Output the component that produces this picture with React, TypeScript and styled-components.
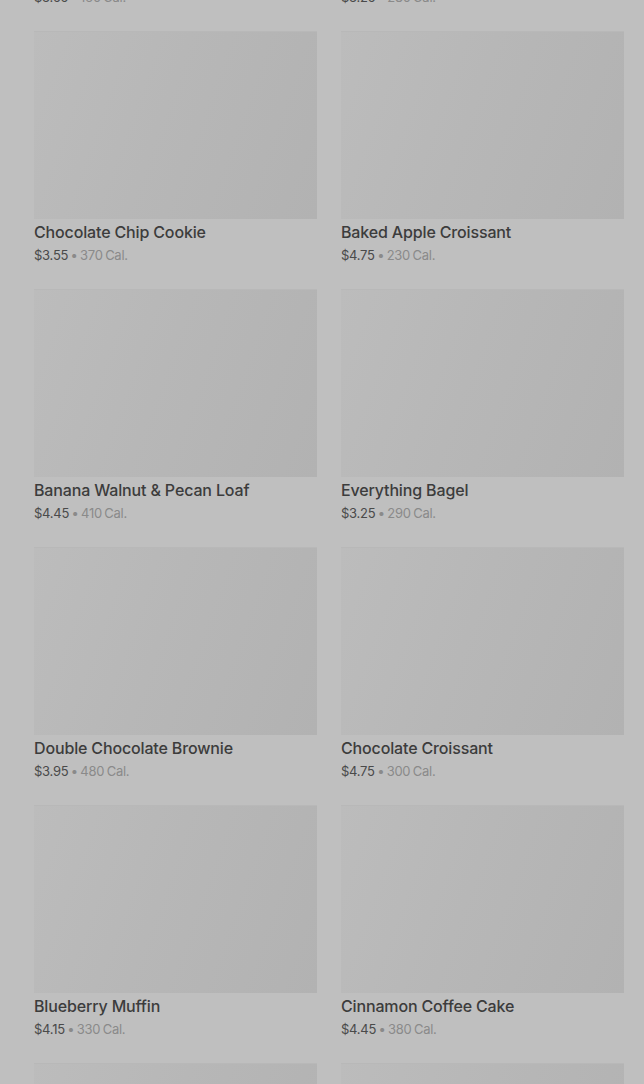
import React from 'react';
import styled, { createGlobalStyle } from 'styled-components';

const GlobalStyle = createGlobalStyle`
  html, body {
    margin: 0;
    padding: 0;
    background: #bfbfbf;
    overflow: hidden;
  }
  body {
    font-family: Inter, "Noto Sans", "Liberation Sans", sans-serif;
    -webkit-font-smoothing: antialiased;
  }
`;

interface IItem {
  name: string;
  price: string;
  cal: number;
}

const ITEMS: IItem[] = [
  { name: 'Butter Croissant', price: '$3.55', cal: 160 },
  { name: 'Plain Bagel', price: '$3.25', cal: 280 },
  { name: 'Chocolate Chip Cookie', price: '$3.55', cal: 370 },
  { name: 'Baked Apple Croissant', price: '$4.75', cal: 230 },
  { name: 'Banana Walnut & Pecan Loaf', price: '$4.45', cal: 410 },
  { name: 'Everything Bagel', price: '$3.25', cal: 290 },
  { name: 'Double Chocolate Brownie', price: '$3.95', cal: 480 },
  { name: 'Chocolate Croissant', price: '$4.75', cal: 300 },
  { name: 'Blueberry Muffin', price: '$4.15', cal: 330 },
  { name: 'Cinnamon Coffee Cake', price: '$4.45', cal: 380 },
  { name: 'Lemon Loaf', price: '$3.95', cal: 470 },
  { name: 'Cheese Danish', price: '$3.65', cal: 290 },
];

const Page = styled.div`
  height: 1084px;
  overflow: hidden;
`;

// 列表已滚动，首行只露出价格一栏
const Grid = styled.div`
  display: grid;
  grid-template-columns: 283px 283px;
  column-gap: 24px;
  row-gap: 24px;
  padding: 0 20px 0 34px;
  margin-top: -227px;
`;

const Card = styled.div`
  display: flex;
  flex-direction: column;
`;

const Thumb = styled.div`
  height: 188px;
  background: linear-gradient(110deg, #bcbcbc 0%, #b7b7b7 45%, #b2b2b2 100%);
  box-shadow: inset 0 1px 0 #b8b8b8;
`;

const Name = styled.div`
  margin-top: 2px;
  font-size: 16px;
  line-height: 22px;
  font-weight: 500;
  color: #3c3c3c;
  letter-spacing: -0.15px;
`;

const Meta = styled.div`
  margin-top: 2px;
  font-size: 13px;
  line-height: 20px;
  color: #8a8a8a;
  letter-spacing: -0.25px;
  word-spacing: -1px;
`;

const Price = styled.span`
  color: #4a4a4a;
`;

const Product: React.FC<{ item: IItem }> = ({ item }) => (
  <Card>
    <Thumb />
    <Name>{item.name}</Name>
    <Meta>
      <Price>{item.price}</Price> • {item.cal} Cal.
    </Meta>
  </Card>
);

export default function App() {
  return (
    <Page>
      <GlobalStyle />
      <Grid>
        {ITEMS.map(item => (
          <Product key={item.name} item={item} />
        ))}
      </Grid>
    </Page>
  );
}
